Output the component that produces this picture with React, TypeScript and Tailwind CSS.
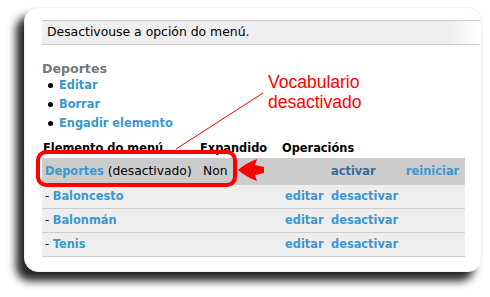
import React from "react";

// Drupal menu admin screenshot: a disabled vocabulary row, with red callouts.

const blue = "text-[#3b97cf]";

function Row({ name }: { name: string }) {
  return (
    <div className="grid h-[24px] grid-cols-[156px_84px_48px_135px] items-center border-b border-[#cccccc] bg-[#eeeeee]">
      <div className="pl-[3px] text-[11.4px] font-bold">
        <span className="font-normal text-black">- </span>
        <span className={blue}>{name}</span>
      </div>
      <div />
      <div className={`pl-[3px] text-[11.4px] font-bold ${blue}`}>editar</div>
      <div className={`pl-[1px] text-[11.4px] font-bold ${blue}`}>desactivar</div>
    </div>
  );
}

export default function App() {
  return (
    <div className="relative h-[297px] w-[490px] overflow-hidden bg-white font-['DejaVu_Sans',sans-serif] text-black">
      <div className="pl-[24px] pt-[7px]">
        <div className="relative h-[265px] w-[458px] rounded-[14px] border border-[#f2f2f2] bg-white pl-[17px] pr-[1px] pt-[12px] shadow-[-8px_9px_8px_rgba(0,0,0,0.85)]">
          {/* status message, fading out at the right edge */}
          <div className="flex h-[25px] items-center border-y border-[#cccccc] bg-[linear-gradient(90deg,#eeeeee_0%,#eeeeee_93%,#ffffff_100%)] pl-[5px] text-[12.4px]">
            Desactivouse a opción do menú.
          </div>

          <h2 className="mt-[17px] text-[12.6px] font-bold leading-[14px] text-[#777777]">Deportes</h2>
          <ul>
            {["Editar", "Borrar", "Engadir elemento"].map((t) => (
              <li key={t} className="flex h-[19px] items-center">
                <span className="ml-[6px] mr-[6px] h-[5px] w-[5px] rounded-full bg-black" />
                <span className={`text-[11.4px] font-bold ${blue}`}>{t}</span>
              </li>
            ))}
          </ul>

          {/* menu items table */}
          <div className="mt-[6px] w-[423px]">
            <div className="grid h-[19px] grid-cols-[156px_84px_183px] items-center text-[11.4px] font-bold">
              <div className="pl-[1px]">Elemento do menú</div>
              <div className="pl-[2px]">Expandido</div>
              <div>Operacións</div>
            </div>
            <div className="grid h-[27px] grid-cols-[156px_84px_48px_75px_60px] items-center bg-[#cccccc]">
              <div className="pl-[3px] text-[12.3px]">
                <span className={`text-[11.4px] font-bold ${blue}`}>Deportes</span> (desactivado)
              </div>
              <div className="pl-[5px] text-[12.3px]">Non</div>
              <div />
              <div className="pl-[1px] text-[11.4px] font-bold text-[#3a6d9c]">activar</div>
              <div className={`pl-[1px] text-[11.4px] font-bold ${blue}`}>reiniciar</div>
            </div>
            <Row name="Baloncesto" />
            <Row name="Balonmán" />
            <Row name="Tenis" />
          </div>

          {/* callouts */}
          <div className="absolute left-[11px] top-[142px] h-[37px] w-[201px] rounded-[10px] border-[4px] border-[#ff0000]" />
          <svg className="absolute left-[213px] top-[151px]" width="26" height="22" viewBox="0 0 26 22">
            <path
              d="M0 11 Q8 4 19 0 L17 6 Q22 7 26 8 L26 14 Q22 15 17 16 L19 22 Q8 18 0 11 Z"
              fill="#ff0000"
            />
          </svg>
          <svg className="pointer-events-none absolute left-0 top-0" width="458" height="265">
            <line x1="151" y1="141" x2="238" y2="85" stroke="#ff0000" strokeWidth="1" />
          </svg>
          <div className="absolute left-[243px] top-[64px] font-['Liberation_Sans',sans-serif] text-[17.5px] leading-[20px] text-[#ff0000]">
            Vocabulario
            <br />
            desactivado
          </div>
        </div>
      </div>
    </div>
  );
}
